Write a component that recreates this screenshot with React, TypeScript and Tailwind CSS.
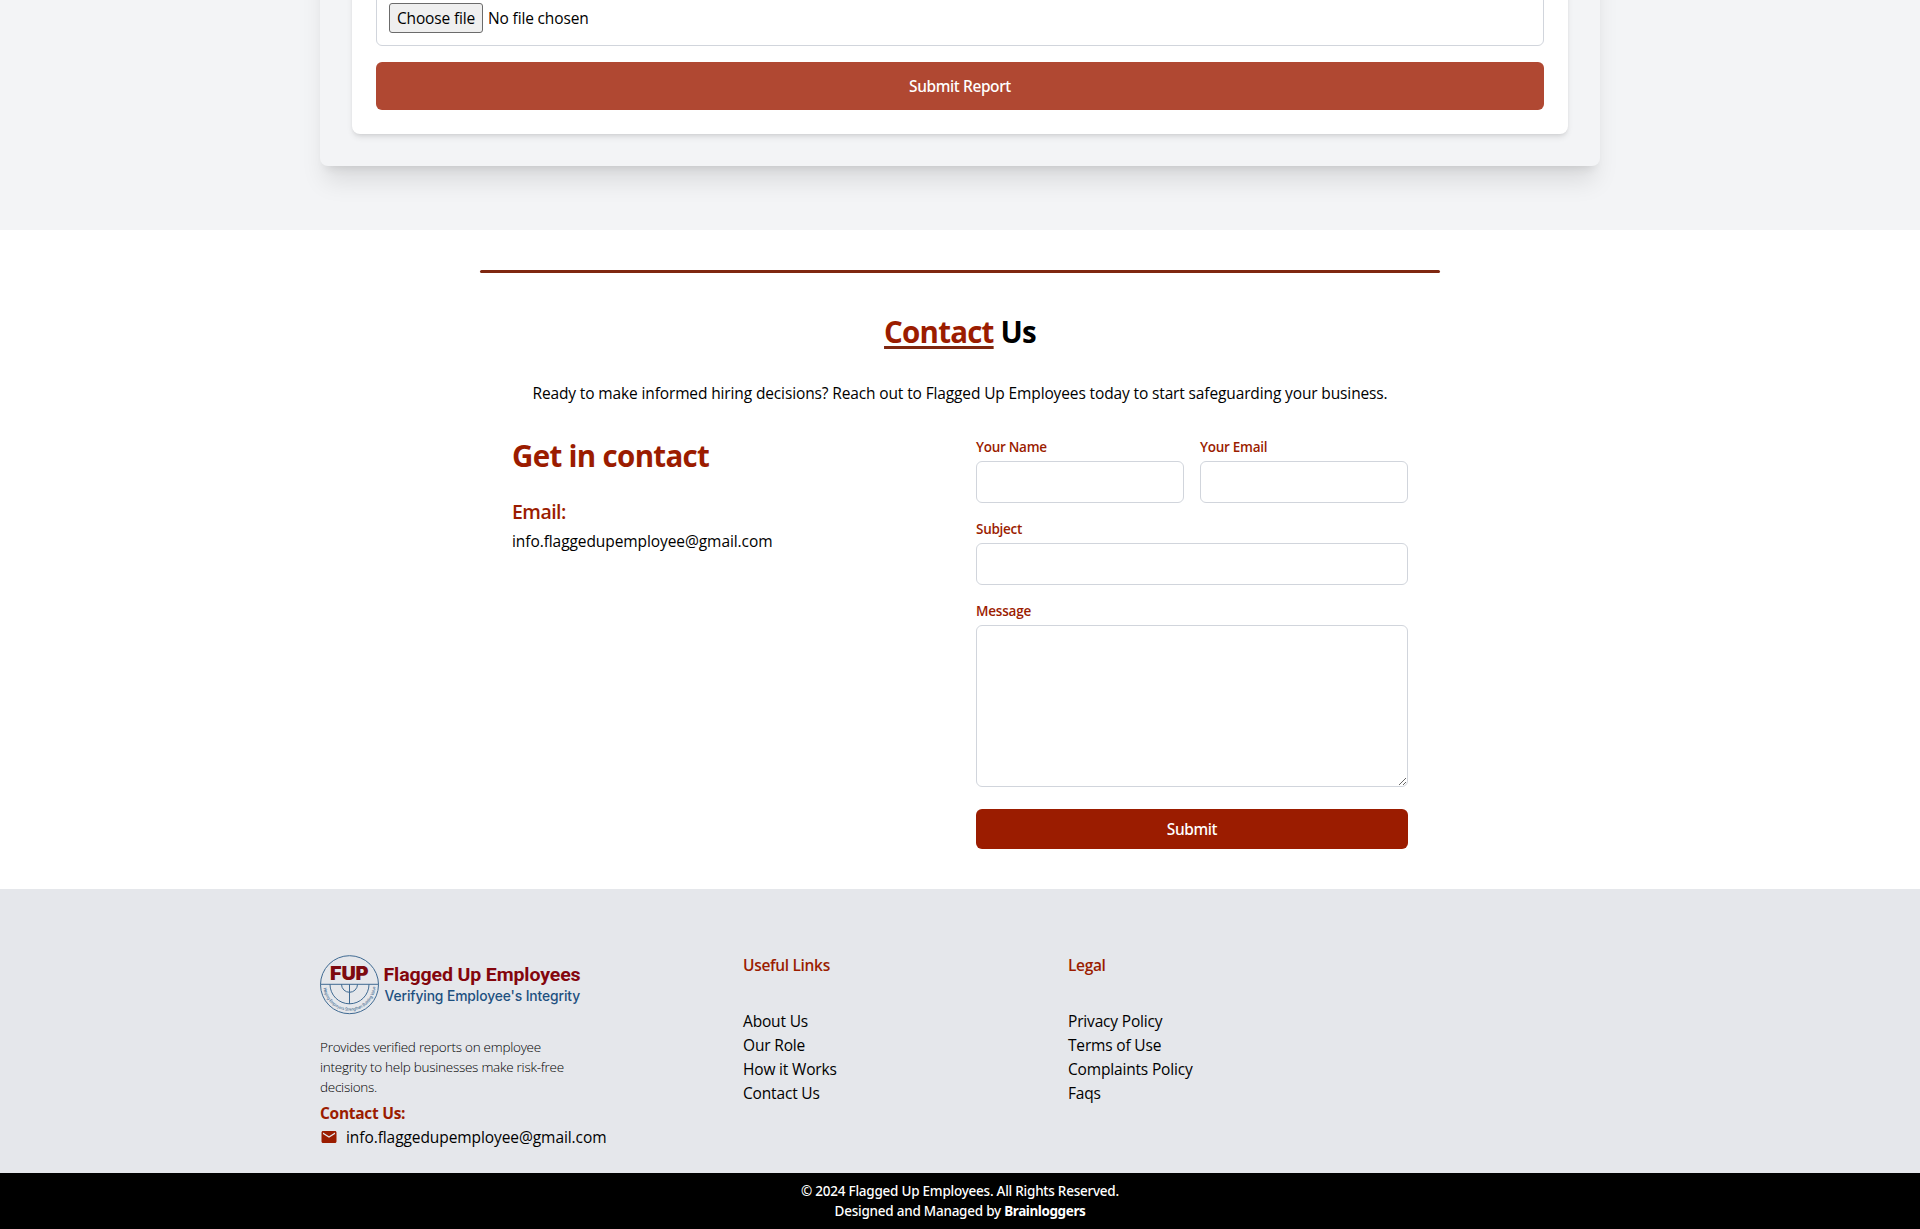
import { MdEmail } from "react-icons/md";

const usefulLinks = ["About Us", "Our Role", "How it Works", "Contact Us"];
const legalLinks = ["Privacy Policy", "Terms of Use", "Complaints Policy", "Faqs"];

function Logo() {
  return (
    <svg width="262" height="60" viewBox="0 0 262 60" className="block overflow-visible">
      <g fill="none" stroke="#3f6a92" strokeWidth="1">
        <circle cx="29.5" cy="29.7" r="29" />
        <path d="M0.5 29.3H58.5" />
        <path d="M29.5 29.3V49" />
        <path d="M10 29.3a19.5 19.5 0 0 0 39 0" />
        <path d="M21.5 29.3a8 8 0 0 0 16 0" />
      </g>
      <path id="logo-arc" d="M3.5 32a26.1 26.1 0 0 0 52 0" fill="none" />
      <text fill="#2c5a86" fontSize="4.2" fontFamily="Inter, sans-serif">
        <textPath href="#logo-arc" startOffset="1" textLength="78" lengthAdjust="spacingAndGlyphs">
          Helping Employers Strengthen Building Values
        </textPath>
      </text>
      <text x="10" y="25" fill="#7d0a10" fontSize="18.5" fontWeight="900" fontFamily="Inter, sans-serif" textLength="38.5" lengthAdjust="spacingAndGlyphs">
        FUP
      </text>
      <text x="63.5" y="25.7" fill="#84060d" fontSize="18" fontWeight="700" fontFamily="Roboto, sans-serif" textLength="197" lengthAdjust="spacingAndGlyphs">
        Flagged Up Employees
      </text>
      <text x="64.5" y="45.5" fill="#1d5080" fontSize="14.5" fontWeight="500" fontFamily="Inter, sans-serif" textLength="195.5" lengthAdjust="spacingAndGlyphs">
        Verifying Employee's Integrity
      </text>
    </svg>
  );
}

function Field({ label }: { label: string }) {
  return (
    <div className="flex flex-col gap-1">
      <label className="text-[13.5px] leading-5 font-semibold tracking-[-0.27px] text-[#9b1c00]">{label}</label>
      <input className="h-[42px] w-full rounded-md border border-gray-300 px-3" />
    </div>
  );
}

function LinkColumn({ title, links }: { title: string; links: string[] }) {
  return (
    <div>
      <h3 className="mb-8 font-semibold tracking-[-0.33px] text-[#9b1c00]">{title}</h3>
      <ul className="tracking-[-0.17px]">
        {links.map((link) => (
          <li key={link}>{link}</li>
        ))}
      </ul>
    </div>
  );
}

export default function App() {
  return (
    <div className="h-[1229px] overflow-hidden bg-white font-['Open_Sans','Noto_Sans',sans-serif] text-[15.5px] leading-6 tracking-[-0.12px] text-black">
      <section className="flex h-[230px] flex-col justify-end overflow-hidden bg-gray-100 pb-16">
        <div className="mx-auto flex h-[266px] w-[1280px] shrink-0 flex-col justify-end rounded-lg bg-gray-100 px-8 pb-8 shadow-xl">
          <div className="flex h-[200px] flex-col justify-end rounded-lg bg-white px-6 pb-6 shadow-md">
            <div className="flex h-[60px] items-end gap-[5px] rounded-md border border-gray-300 px-3 pb-3">
              <button className="h-[30px] w-[94px] rounded-[3px] border border-[#6b6b6b] bg-[#efefef] text-center whitespace-nowrap tracking-[-0.15px]">
                Choose file
              </button>
              <span className="pb-[3px] tracking-[-0.15px]">No file chosen</span>
            </div>
            <button className="mt-4 h-12 w-full rounded-md bg-[#b04832] font-['Noto_Sans',sans-serif] font-medium tracking-[-0.4px] text-white">
              Submit Report
            </button>
          </div>
        </div>
      </section>

      <section className="h-[659px] pt-10">
        <div className="mx-auto w-[960px]">
          <div className="h-[3px] rounded-full bg-[#7f2710]" />
          <h2 className="mt-[41px] text-center text-[29.5px] leading-9 font-bold tracking-[-0.78px]">
            <span className="text-[#9b1c00] underline decoration-[#7f2710] decoration-[3px] underline-offset-[3px]">Contact</span>{" "}
            Us
          </h2>
          <p className="mt-[31px] text-center tracking-[-0.13px]">
            Ready to make informed hiring decisions? Reach out to Flagged Up Employees today to start safeguarding your business.
          </p>
          <div className="mt-8 grid grid-cols-2 gap-8 px-8">
            <div className="pt-px">
              <h3 className="text-[29.5px] leading-9 font-bold tracking-[-0.68px] text-[#9b1c00]">Get in contact</h3>
              <h4 className="mt-6 text-[19.5px] leading-7 font-semibold tracking-[-0.55px] text-[#9b1c00]">Email:</h4>
              <p className="mt-[3px] tracking-[-0.08px]">info.flaggedupemployee@gmail.com</p>
            </div>
            <form className="flex flex-col gap-4">
              <div className="grid grid-cols-2 gap-4">
                <Field label="Your Name" />
                <Field label="Your Email" />
              </div>
              <Field label="Subject" />
              <div className="flex flex-col gap-1">
                <label className="text-[13.5px] leading-5 font-semibold tracking-[-0.2px] text-[#9b1c00]">Message</label>
                <textarea className="h-[162px] w-full rounded-md border border-gray-300 px-3" />
              </div>
              <button className="mt-1.5 h-10 rounded-md bg-[#9b1c00] font-['Noto_Sans',sans-serif] font-medium tracking-[-0.4px] text-white">
                Submit
              </button>
            </form>
          </div>
        </div>
      </section>

      <footer>
        <div className="h-[284px] bg-gray-200 pt-16">
          <div className="mx-auto grid w-[1280px] grid-cols-[423px_325px_1fr]">
            <div>
              <div className="pt-0.5">
                <Logo />
              </div>
              <p className="mt-[22px] w-[260px] text-[13.5px] leading-5 font-light tracking-[-0.26px]">
                Provides verified reports on employee
                <br />
                integrity to help businesses make risk-free
                <br />
                decisions.
              </p>
              <p className="mt-1 font-bold tracking-[-0.28px] text-[#9b1c00]">Contact Us:</p>
              <div className="flex items-center gap-2">
                <MdEmail size={18} className="text-[#9b1c00]" />
                <span className="tracking-[-0.08px]">info.flaggedupemployee@gmail.com</span>
              </div>
            </div>
            <LinkColumn title="Useful Links" links={usefulLinks} />
            <LinkColumn title="Legal" links={legalLinks} />
          </div>
        </div>
        <div className="h-14 bg-black py-2 text-center font-['Noto_Sans',sans-serif] text-[13.5px] leading-5 font-medium tracking-[-0.24px] text-white">
          <p>© 2024 Flagged Up Employees. All Rights Reserved.</p>
          <p>
            Designed and Managed by <span className="font-bold tracking-[-0.4px]">Brainloggers</span>
          </p>
        </div>
      </footer>
    </div>
  );
}
